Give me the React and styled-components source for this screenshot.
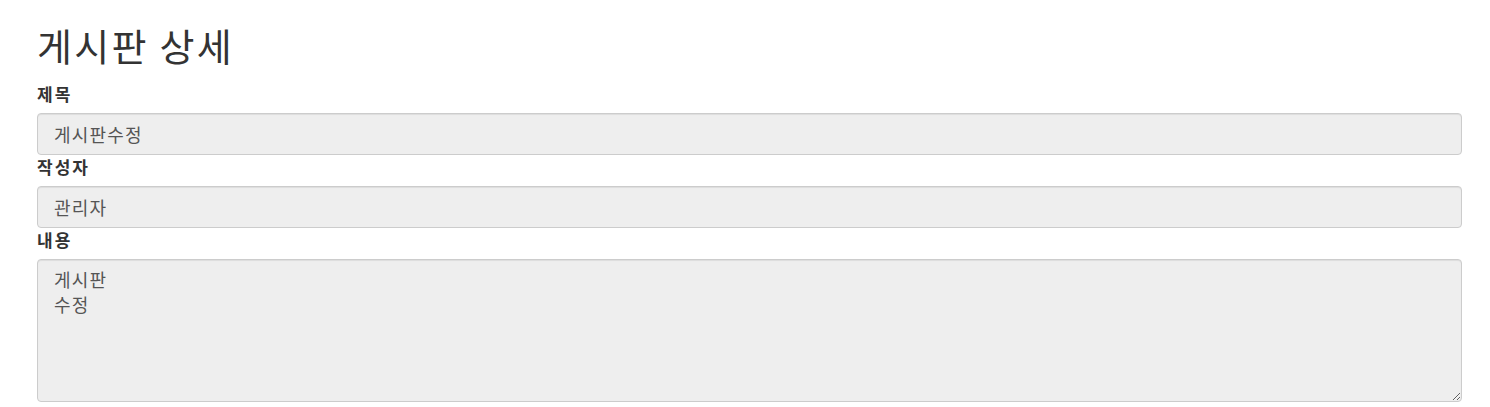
import React from 'react';
import styled, { createGlobalStyle } from 'styled-components';

const GlobalStyle = createGlobalStyle`
	body {
		margin: 0;
		background: #fff;
		font-family: "Noto Sans CJK KR", "Noto Sans", sans-serif;
		color: #333;
	}
`;

const Page = styled.div`
	box-sizing: border-box;
	width: 100%;
	padding: 0 28px 0 37px;
`;

const Title = styled.h1`
	font-size: 38px;
	font-weight: 400;
	letter-spacing: 2.3px;
	line-height: 40px;
	margin: 25px 0 17px;
	color: #333;
`;

const Label = styled.label`
	display: block;
	font-size: 17px;
	font-weight: 700;
	letter-spacing: 2px;
	line-height: 23px;
	margin-bottom: 8px;
	color: #333;
`;

const fieldBase = `
	display: block;
	box-sizing: border-box;
	width: 100%;
	margin: 0;
	padding: 0 16px;
	font-family: "Noto Sans CJK KR", "Noto Sans", sans-serif;
	font-size: 18px;
	letter-spacing: 1.2px;
	color: #555;
	background: #eee;
	border: 1px solid #ccc;
	border-radius: 4px;
	box-shadow: inset 0 1px 1px rgba(0, 0, 0, 0.075);
	outline: none;
`;

const Input = styled.input`
	${fieldBase}
	height: 42px;
`;

const TextArea = styled.textarea`
	${fieldBase}
	height: 143px;
	margin-top: 1px;
	padding-top: 7px;
	line-height: 25px;
	resize: both;
`;

function Field({ label, value, multiline }) {
	return (
		<div>
			<Label>{label}</Label>
			{multiline ? (
				<TextArea readOnly value={value} />
			) : (
				<Input readOnly value={value} />
			)}
		</div>
	);
}

export default function App() {
	return (
		<>
			<GlobalStyle />
			<Page>
				<Title>게시판 상세</Title>
				<Field label="제목" value="게시판수정" />
				<Field label="작성자" value="관리자" />
				<Field label="내용" value={'게시판\n수정'} multiline />
			</Page>
		</>
	);
}
